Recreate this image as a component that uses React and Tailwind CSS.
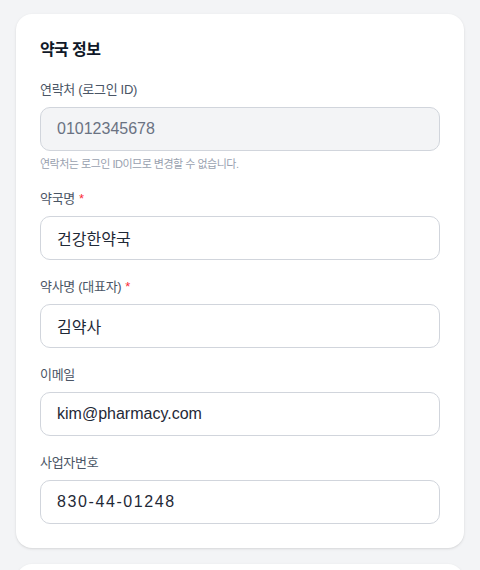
const fields = [
  { label: "약국명", value: "건강한약국", required: true },
  { label: "약사명 (대표자)", value: "김약사", required: true },
  { label: "이메일", value: "kim@pharmacy.com" },
  { label: "사업자번호", value: "830-44-01248", mono: true },
];

function Field({ label, value, required, mono }) {
  return (
    <div>
      <label className="block text-[13px] leading-5 tracking-[-0.3px] text-gray-600 mb-[7px]">
        {label}
        {required && <span className="text-red-500 ml-1">*</span>}
      </label>
      <input
        className={
          "w-full h-11 px-4 rounded-[10px] border border-gray-300 bg-white text-base text-[#1f2937] outline-none" +
          (mono ? " tracking-widest" : "")
        }
        defaultValue={value}
      />
    </div>
  );
}

export default function App() {
  return (
    <div
      className="min-h-screen bg-gray-100 px-4 pt-[14px] pb-6"
      style={{ fontFamily: '"Liberation Sans", "Noto Sans CJK KR", sans-serif' }}
    >
      <div className="bg-white rounded-2xl p-6 shadow-sm">
        <h2 className="text-base font-bold text-gray-900 leading-6 tracking-[-0.6px] mb-[18px]">
          약국 정보
        </h2>
        <div className="flex flex-col gap-[17px]">
          <div>
            <label className="block text-[13px] leading-5 tracking-[-0.3px] text-gray-600 mb-[7px]">
              연락처 (로그인 ID)
            </label>
            <input
              className="w-full h-11 px-4 rounded-[10px] border border-gray-300 bg-gray-100 text-base text-gray-500 outline-none"
              value="01012345678"
              disabled
              readOnly
            />
            <p className="mt-[5px] text-[11px] leading-4 tracking-[-0.5px] text-gray-400">
              연락처는 로그인 ID이므로 변경할 수 없습니다.
            </p>
          </div>
          {fields.map((f) => (
            <Field key={f.label} {...f} />
          ))}
        </div>
      </div>
      <div className="bg-white rounded-2xl mt-4 h-40 shadow-sm"></div>
    </div>
  );
}
